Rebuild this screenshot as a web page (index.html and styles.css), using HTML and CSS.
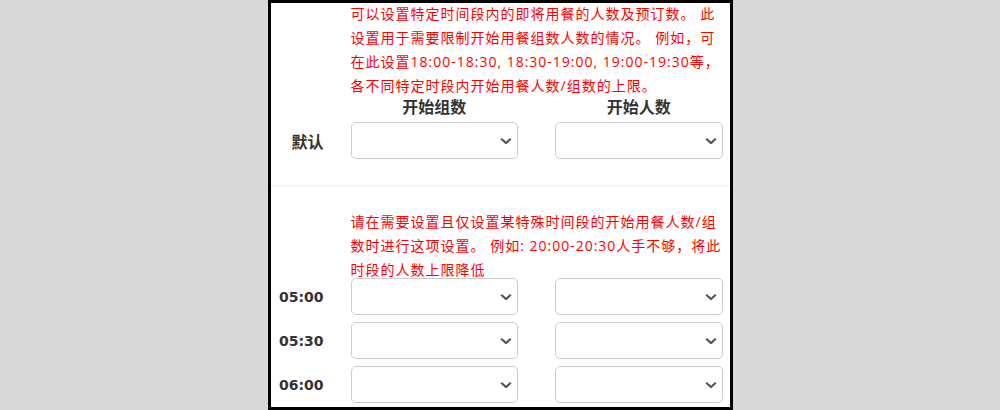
FILE: index.html
```html
<!DOCTYPE html>
<html lang="zh-CN">
<head>
  <meta charset="UTF-8">
  <meta name="viewport" content="width=device-width, initial-scale=1.0">
  <title>用餐人数设置</title>
  <link rel="stylesheet" href="styles.css">
</head>
<body>
  <div class="panel">
    <section class="limit-section">
      <p class="note">可以设置特定时间段内的即将用餐的人数及预订数。 此设置用于需要限制开始用餐组数人数的情况。 例如，可在此设置18:00-18:30, 18:30-19:00, 19:00-19:30等，各不同特定时段内开始用餐人数/组数的上限。</p>
      <div class="form-row head-row">
        <div class="row-label"></div>
        <div class="fields">
          <div class="col-head">开始组数</div>
          <div class="col-head">开始人数</div>
        </div>
      </div>
      <div class="form-row default-row">
        <label class="row-label row-label-lg">默认</label>
        <div class="fields">
          <div class="select-wrap">
            <select class="form-select"></select>
            <svg class="chevron" viewBox="0 0 12 7" width="12" height="7"><path d="M1.2 1.2 L6 5.6 L10.8 1.2"/></svg>
          </div>
          <div class="select-wrap">
            <select class="form-select"></select>
            <svg class="chevron" viewBox="0 0 12 7" width="12" height="7"><path d="M1.2 1.2 L6 5.6 L10.8 1.2"/></svg>
          </div>
        </div>
      </div>
    </section>

    <section class="limit-section time-section">
      <p class="note">请在需要设置且仅设置某特殊时间段的开始用餐人数/组数时进行这项设置。 例如: 20:00-20:30人手不够，将此时段的人数上限降低</p>
      <div class="time-rows">
        <div class="form-row">
          <label class="row-label">05:00</label>
          <div class="fields">
            <div class="select-wrap">
              <select class="form-select"></select>
              <svg class="chevron" viewBox="0 0 12 7" width="12" height="7"><path d="M1.2 1.2 L6 5.6 L10.8 1.2"/></svg>
            </div>
            <div class="select-wrap">
              <select class="form-select"></select>
              <svg class="chevron" viewBox="0 0 12 7" width="12" height="7"><path d="M1.2 1.2 L6 5.6 L10.8 1.2"/></svg>
            </div>
          </div>
        </div>
        <div class="form-row">
          <label class="row-label">05:30</label>
          <div class="fields">
            <div class="select-wrap">
              <select class="form-select"></select>
              <svg class="chevron" viewBox="0 0 12 7" width="12" height="7"><path d="M1.2 1.2 L6 5.6 L10.8 1.2"/></svg>
            </div>
            <div class="select-wrap">
              <select class="form-select"></select>
              <svg class="chevron" viewBox="0 0 12 7" width="12" height="7"><path d="M1.2 1.2 L6 5.6 L10.8 1.2"/></svg>
            </div>
          </div>
        </div>
        <div class="form-row">
          <label class="row-label">06:00</label>
          <div class="fields">
            <div class="select-wrap">
              <select class="form-select"></select>
              <svg class="chevron" viewBox="0 0 12 7" width="12" height="7"><path d="M1.2 1.2 L6 5.6 L10.8 1.2"/></svg>
            </div>
            <div class="select-wrap">
              <select class="form-select"></select>
              <svg class="chevron" viewBox="0 0 12 7" width="12" height="7"><path d="M1.2 1.2 L6 5.6 L10.8 1.2"/></svg>
            </div>
          </div>
        </div>
      </div>
    </section>
  </div>
</body>
</html>
```

FILE: styles.css
```css
body {
  margin: 0;
  padding: 0;
  background-color: #d9d9d9;
  font-family: "Noto Sans CJK SC", sans-serif;
  color: #333;
}

.panel {
  box-sizing: border-box;
  width: 465px;
  height: 410px;
  margin: 0 auto;
  background-color: #fff;
  border: 3px solid #000;
  overflow: hidden;
}

.limit-section {
  padding-bottom: 26px;
}

.limit-section:first-child .note {
  margin-top: -1px;
}

.time-section {
  border-top: 1px solid #eee;
  padding-top: 24px;
  padding-bottom: 0;
}

.note {
  width: 376px;
  margin: 0 0 0 80px;
  color: #f00;
  font-family: "Open Sans", "Noto Sans CJK SC", sans-serif;
  font-size: 14px;
  line-height: 24px;
  letter-spacing: 1px;
}

.form-row {
  display: flex;
  align-items: center;
}

.row-label {
  box-sizing: border-box;
  width: 80px;
  padding-right: 27px;
  text-align: right;
  font-family: "DejaVu Sans", "Noto Sans CJK SC", sans-serif;
  font-size: 14px;
  font-weight: bold;
  color: #333;
}

.row-label-lg {
  font-size: 16px;
}

.fields {
  display: grid;
  grid-template-columns: 1fr 1fr;
  column-gap: 37px;
  width: 372px;
}

.col-head {
  text-align: center;
  font-size: 16px;
  font-weight: bold;
  line-height: 16px;
}

.default-row {
  margin-top: 8px;
}

.time-rows {
  display: flex;
  flex-direction: column;
  gap: 7px;
  margin-top: -4px;
}

.select-wrap {
  position: relative;
}

.form-select {
  display: block;
  box-sizing: border-box;
  width: 100%;
  height: 37px;
  margin: 0;
  padding: 0 24px 0 10px;
  border: 1px solid #ccc;
  border-radius: 5px;
  background-color: #fff;
  appearance: none;
  -webkit-appearance: none;
  font-size: 14px;
}

.chevron {
  position: absolute;
  right: 6px;
  top: 50%;
  transform: translateY(-50%);
  pointer-events: none;
}

.chevron path {
  fill: none;
  stroke: #555;
  stroke-width: 2.2;
}
```
